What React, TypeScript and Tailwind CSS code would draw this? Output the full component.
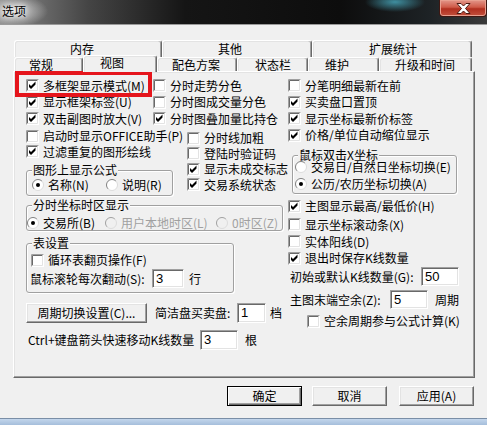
import React from "react";

const Box = ({ checked }: { checked?: boolean }) => (
  <svg width="13" height="13" viewBox="0 0 13 13" className="shrink-0">
    <rect x="0" y="0" width="13" height="13" fill="#fff" />
    <path d="M0.5 12.5V0.5H12.5" stroke="#a0a0a0" fill="none" />
    <path d="M1.5 11.5V1.5H11.5" stroke="#696969" fill="none" />
    <path d="M1.5 11.5H11.5V1.5" stroke="#e3e3e3" fill="none" />
    {checked && <path d="M3 5L5 7L9.5 2.5V5.5L5 10L3 8Z" fill="#000" />}
  </svg>
);

const Dot = ({ on, disabled }: { on?: boolean; disabled?: boolean }) => (
  <svg width="12" height="12" viewBox="0 0 12 12" className="shrink-0">
    <circle cx="6" cy="6" r="5.5" fill={disabled ? "#f0f0f0" : "#fff"} />
    <path d="M2.1 9.9A5.5 5.5 0 0 1 9.9 2.1" stroke={disabled ? "#a0a0a0" : "#808080"} fill="none" />
    <path d="M9.9 2.1A5.5 5.5 0 0 1 2.1 9.9" stroke="#dcdcdc" fill="none" />
    {on && <circle cx="6" cy="6" r="2" fill="#000" />}
  </svg>
);

const Chk = ({ label, checked, className = "" }: { label: string; checked?: boolean; className?: string }) => (
  <div className={`flex items-center gap-[4px] whitespace-nowrap ${className}`}>
    <Box checked={checked} />
    <span>{label}</span>
  </div>
);

const Opt = ({ label, on, disabled, className = "" }: { label: string; on?: boolean; disabled?: boolean; className?: string }) => (
  <div className={`flex items-center gap-[4px] whitespace-nowrap ${className}`}>
    <Dot on={on} disabled={disabled} />
    <span className={disabled ? "text-[#a0a0a0]" : ""}>{label}</span>
  </div>
);

const Group = ({
  title,
  className = "",
  legend = "leading-[14px]",
  children,
}: {
  title: string;
  className?: string;
  legend?: string;
  children: React.ReactNode;
}) => (
  <fieldset className={`border border-[#a0a0a0] rounded-[3px] shadow-[inset_1px_1px_0_#fff,1px_1px_0_#fff] ${className}`}>
    <legend className={`ml-[5px] px-[1px] bg-[#f0f0f0] whitespace-nowrap ${legend}`}>{title}</legend>
    {children}
  </fieldset>
);

const Field = ({ value, className = "" }: { value: string; className?: string }) => (
  <div
    className={`h-[19px] bg-white border border-t-[#a0a0a0] border-l-[#a0a0a0] border-b-white border-r-white shadow-[inset_1px_1px_0_#696969,inset_-1px_-1px_0_#e3e3e3] flex items-center pl-[3px] font-['Liberation_Sans',sans-serif] text-[13px] ${className}`}
  >
    {value}
  </div>
);

const Btn = ({ children, className = "", def }: { children: React.ReactNode; className?: string; def?: boolean }) => (
  <div
    className={`flex items-center justify-center bg-[#f0f0f0] whitespace-nowrap ${
      def
        ? "border border-black shadow-[inset_1px_1px_0_#fff,inset_-1px_-1px_0_#696969,inset_-2px_-2px_0_#a0a0a0]"
        : "border border-t-white border-l-white border-b-[#696969] border-r-[#696969] shadow-[inset_-1px_-1px_0_#a0a0a0,inset_1px_1px_0_#e3e3e3]"
    } ${className}`}
  >
    {children}
  </div>
);

const Tab = ({ label, className, sel }: { label: string; className: string; sel?: boolean }) => (
  <div
    className={`flex items-center whitespace-nowrap bg-[#f0f0f0] rounded-t-[3px] border-t border-l border-white border-r border-r-[#696969] shadow-[inset_-1px_0_0_#a0a0a0,inset_1px_1px_0_#e3e3e3] ${
      sel ? "relative z-10 -mt-[2px] h-[17px] pb-[3px]" : "h-full"
    } ${className}`}
  >
    {label}
  </div>
);

export default function App() {
  return (
    <div className="w-[487px] h-[425px] bg-[#f0f0f0] relative overflow-hidden flex flex-col text-[12px] leading-[14px] text-black font-['Noto_Sans_CJK_SC',sans-serif]">
      {/* title bar */}
      <div className="h-[25px] shrink-0 flex items-start justify-between border-b border-[#9a9a9a] bg-[image:radial-gradient(ellipse_34px_16px_at_14px_11px,#d6d6d6,transparent),radial-gradient(ellipse_30px_10px_at_395px_2px,#3f8fa0,transparent),linear-gradient(90deg,#8a8a8a,#454545_18%,#151515_38%,#0d0d0d_70%,#1d2225_88%,#3a3a3a)]">
        <span className="pl-[2px] pt-[4px] [text-shadow:0_0_5px_#fff,0_0_8px_#fff]">选项</span>
        <div className="w-[48px] h-[17px] border border-t-0 border-[#3d1712] rounded-b-[4px] flex items-center justify-center bg-[linear-gradient(180deg,#e3978a,#cf5a48_45%,#b12f1f_55%,#c2503d)] shadow-[inset_0_0_0_1px_#e8a090]">
          <svg width="15" height="11" viewBox="0 0 15 11">
            <path d="M1 0.5h4l2.5 2.5 2.5-2.5h4l-4.5 5 4.5 5h-4l-2.5-2.5-2.5 2.5h-4l4.5-5z" fill="#fff" stroke="#4a1a12" strokeWidth="1" />
          </svg>
        </div>
      </div>

      {/* dialog body */}
      <div className="flex-1 pt-[15px] pl-[13px]">
        <div className="ml-[1px] w-[458px]">
          <div className="flex h-[17px]">
            <Tab label="内存" className="w-[148px] pl-[55px]" />
            <Tab label="其他" className="w-[150px] pl-[55px]" />
            <Tab label="扩展统计" className="w-[160px] pl-[56px]" />
          </div>
          <div className="flex h-[14px] items-start">
            <Tab label="常规" className="w-[69px] pl-[14px]" />
            <Tab label="视图" className="w-[74px] pl-[16px]" sel />
            <Tab label="配色方案" className="w-[80px] pl-[14px]" />
            <Tab label="状态栏" className="w-[71px] pl-[17px]" />
            <Tab label="维护" className="w-[71px] pl-[16px]" />
            <Tab label="升级和时间" className="w-[93px] pl-[15px]" />
          </div>
        </div>

        <div className="w-[462px] h-[307px] border border-t-white border-l-white border-r-[#696969] border-b-[#696969] shadow-[inset_-1px_-1px_0_#a0a0a0,inset_1px_1px_0_#e3e3e3] flex pl-[12px] pt-[5px]">
          {/* left side */}
          <div className="w-[262px] flex flex-col">
            <div className="flex">
              <div className="w-[127px] flex flex-col">
                <Chk label="多框架显示模式(M)" checked className="h-[17px]" />
                <Chk label="显示框架标签(U)" checked className="h-[16px]" />
                <Chk label="双击副图时放大(V)" checked className="h-[17px]" />
              </div>
              <div className="flex flex-col">
                <Chk label="分时走势分色" className="h-[17px]" />
                <Chk label="分时图成交量分色" className="h-[16px]" />
                <Chk label="分时图叠加量比持仓" checked className="h-[17px]" />
              </div>
            </div>

            <div className="flex">
              <div className="w-[161px] flex flex-col pt-[1px]">
                <Chk label="启动时显示OFFICE助手(P)" className="h-[16px]" />
                <Chk label="过滤重复的图形绘线" checked className="h-[15px]" />
                <Group title="图形上显示公式" className="mt-[4px] w-[147px] pb-[3px]">
                  <div className="flex h-[14px] mt-[1px] pl-[5px]">
                    <Opt label="名称(N)" on className="w-[74px]" />
                    <Opt label="说明(R)" />
                  </div>
                </Group>
              </div>
              <div className="flex flex-col pt-[3px]">
                <Chk label="分时线加粗" className="h-[16px]" />
                <Chk label="登陆时验证码" className="h-[15px]" />
                <Chk label="显示未成交标志" checked className="h-[16px]" />
                <Chk label="交易系统状态" checked className="h-[15px]" />
              </div>
            </div>

            <Group title="分时坐标时区显示" className="mt-[2px] w-[257px]">
              <div className="flex h-[14px] mt-[4px]">
                <Opt label="交易所(B)" on className="w-[78px]" />
                <Opt label="用户本地时区(L)" disabled className="w-[111px]" />
                <Opt label="0时区(Z)" disabled />
              </div>
            </Group>

            <Group title="表设置" className="mt-[5px] w-[208px] pb-[4px]">
              <Chk label="循环表翻页操作(F)" className="h-[14px] mt-[3px] pl-[4px]" />
              <div className="flex items-center h-[19px] mt-[2px]">
                <span className="w-[125px] pl-[3px] whitespace-nowrap">鼠标滚轮每次翻动(S):</span>
                <Field value="3" className="w-[32px]" />
                <span className="ml-[5px]">行</span>
              </div>
            </Group>

            <div className="flex items-center h-[20px] mt-[10px]">
              <Btn className="w-[121px] h-[20px]">周期切换设置(C)...</Btn>
              <span className="ml-[8px] w-[82px] whitespace-nowrap">简洁盘买卖盘:</span>
              <Field value="1" className="w-[29px] h-[20px]" />
              <span className="ml-[4px]">档</span>
            </div>

            <div className="flex items-center h-[20px] mt-[7px]">
              <span className="w-[174px] pl-[2px] whitespace-nowrap">Ctrl+键盘箭头快速移动K线数量</span>
              <Field value="3" className="w-[38px] h-[20px]" />
              <span className="ml-[7px]">根</span>
            </div>
          </div>

          {/* right side */}
          <div className="w-[172px] flex flex-col">
            <Chk label="分笔明细最新在前" className="h-[17px]" />
            <Chk label="买卖盘口置顶" checked className="h-[16px]" />
            <Chk label="显示坐标最新价标签" checked className="h-[17px]" />
            <Chk label="价格/单位自动缩位显示" checked className="h-[16px]" />

            <Group title="鼠标双击X坐标" legend="leading-[10px]" className="mt-[7px] ml-[4px] w-[165px] pb-[2px]">
              <Opt label="交易日/自然日坐标切换(E)" className="h-[14px] pl-[2px]" />
              <Opt label="公历/农历坐标切换(A)" on className="h-[14px] mt-[3px] pl-[2px]" />
            </Group>

            <Chk label="主图显示最高/最低价(H)" checked className="h-[16px] mt-[4px]" />
            <Chk label="显示坐标滚动条(X)" className="h-[17px] mt-[2px]" />
            <Chk label="实体阳线(D)" className="h-[17px]" />
            <Chk label="退出时保存K线数量" checked className="h-[16px]" />

            <div className="flex items-center h-[19px] mt-[1px]">
              <span className="ml-[2px] w-[131px] whitespace-nowrap">初始或默认K线数量(G):</span>
              <Field value="50" className="w-[38px]" />
            </div>
            <div className="flex items-center h-[19px] mt-[4px]">
              <span className="ml-[2px] w-[100px] whitespace-nowrap">主图末端空余(Z):</span>
              <Field value="5" className="w-[38px]" />
              <span className="ml-[7px]">周期</span>
            </div>
            <Chk label="空余周期参与公式计算(K)" className="h-[16px] mt-[4px] ml-[19px] gap-[2px]" />
          </div>
        </div>

        <div className="flex h-[20px] mt-[8px]">
          <Btn def className="ml-[214px] w-[75px] h-[20px]">确定</Btn>
          <Btn className="ml-[10px] w-[75px] h-[20px]">取消</Btn>
          <Btn className="ml-[12px] w-[75px] h-[20px]">应用(A)</Btn>
        </div>
      </div>

      {/* window frame bottom */}
      <div className="h-[7px] shrink-0 border-t border-[#7a8ea6] bg-[linear-gradient(180deg,#c3d6ec,#a5bedb)]" />

      {/* red highlight */}
      <div className="absolute left-[15px] top-[71px] w-[137px] h-[26px] border-[4px] border-[#e5151c]" />
    </div>
  );
}
